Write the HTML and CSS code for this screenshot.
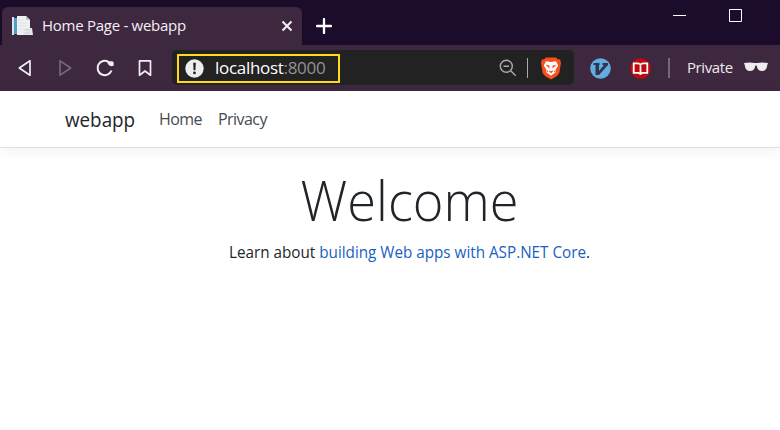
FILE: index.html
```html
<!DOCTYPE html>
<html lang="en">
<head>
<meta charset="utf-8">
<title>Home Page - webapp</title>
<link rel="stylesheet" href="styles.css">
</head>
<body>
<div class="titlebar">
  <div class="tab">
    <svg class="favicon" width="21" height="21" viewBox="0 0 21 21"><path d="M1 2h6v16H1z" fill="#4d9fc9"/><path d="M0 1h2v18H0z" fill="#d9e6ee"/><path d="M5 0h9l4 4v15H5z" fill="#eef1f3"/><path d="M14 0v4h4z" fill="#b9c5cd"/><path d="M7 4h5M7 7h8M7 10h8M7 13h5M7 16h3" stroke="#dde3e7"/><path d="M11 12h9l1 7H11z" fill="#e4e7ea"/><path d="M13 14h5M13 17h5" stroke="#c8cfd4"/></svg>
    <span class="tab-title">Home Page - webapp</span>
    <svg class="tab-close" width="12" height="12" viewBox="0 0 12 12"><path d="M1.500 1.500l9 9M10.500 1.500l-9 9" stroke="#f4f0f5" stroke-width="2"/></svg>
  </div>
  <svg class="new-tab" width="16" height="16" viewBox="0 0 16 16"><path d="M8 1v14M1 8h14" stroke="#fff" stroke-width="2.300" stroke-linecap="round"/></svg>
  <div class="window-controls">
    <svg width="13" height="13" viewBox="0 0 13 13"><path d="M0 6.500h13" stroke="#fff"/></svg>
    <svg width="13" height="13" viewBox="0 0 13 13"><path d="M.5.5h12v12H.5z" fill="none" stroke="#fff"/></svg>
  </div>
</div>
<div class="toolbar">
  <div class="nav-buttons">
    <svg width="20" height="20" viewBox="0 0 20 20"><path d="M15 2.800v14.400L4.300 10z" fill="none" stroke="#f1edf2" stroke-width="1.700" stroke-linejoin="round"/></svg>
    <svg width="20" height="20" viewBox="0 0 20 20"><path d="M5 2.800v14.400L15.700 10z" fill="none" stroke="#786879" stroke-width="1.600" stroke-linejoin="round"/></svg>
    <svg width="20" height="20" viewBox="0 0 20 20"><path d="M13.500 3.800A7.200 7.200 0 1 0 16.500 12.500" fill="none" stroke="#f1edf2" stroke-width="2"/><path d="M11.500 3.200h5.500q1.700 0 1.700 1.700v2.600q-3 1.500-5-.5z" fill="#f1edf2"/></svg>
    <svg width="20" height="20" viewBox="0 0 20 20"><path d="M4.500 2.800h11v14.400L10 13l-5.500 4.200z" fill="none" stroke="#f1edf2" stroke-width="1.700" stroke-linejoin="round"/></svg>
  </div>
  <div class="address">
    <div class="origin">
      <svg width="19" height="19" viewBox="0 0 19 19"><circle cx="9.500" cy="9.500" r="9.200" fill="#eee"/><path d="M8.200 3.800h2.600l-.4 7.400H8.600z" fill="#222"/><circle cx="9.500" cy="13.900" r="1.400" fill="#222"/></svg>
      <span class="url">localhost<span class="port">:8000</span></span>
    </div>
    <svg class="zoom" width="18" height="18" viewBox="0 0 18 18"><circle cx="7.300" cy="7.300" r="6" fill="none" stroke="#aaa" stroke-width="1.400"/><path d="M4.500 7.300h5.600M11.700 11.700l5 5" stroke="#aaa" stroke-width="1.400"/></svg>
    <i class="divider"></i>
    <svg class="brave" width="20" height="23" viewBox="0 0 20 23"><path d="M5 .5h10l2 2 2-.2L20 6l-1.700 10Q17 19 10 22.500 3 19 1.700 16L0 6l1-3.700 2 .2z" fill="#f4511e"/><path d="M5 4.300l5 .8 5-.8 2.200 4.200-2.600 4.300.5 2.200-2.700 2-2.400 1.800-2.400-1.800-2.700-2 .5-2.200L2.800 8.500z" fill="#fff"/><path d="M4.500 7.700l4 .8v3zM15.500 7.700l-4 .8v3zM7.800 13.300l2.200.9 2.200-.9-.6 1.800L10 16.300l-1.600-1.200zM4.900 13l2.500 1.300-1.200 1.300zM15.100 13l-2.500 1.300 1.200 1.300z" fill="#f4511e"/></svg>
  </div>
  <svg class="vim" width="21" height="21" viewBox="0 0 21 21"><circle cx="10.500" cy="10.500" r="10.300" fill="#62acdf"/><path d="M3.500 5h6v2H9v6L14 7h-1.500V5H18v2L9 17H5.500V7h-2z" fill="#34334c"/></svg>
  <svg class="reader" width="21" height="21" viewBox="0 0 21 21"><circle cx="10.500" cy="10.500" r="10.300" fill="#bf0a0e"/><path d="M3.700 5.300h4.500l2.300 1.200 2.300-1.200h4.500v9.500h-4.500l-2.300 1.200-2.300-1.200H3.700zM10.500 6.500v9" fill="none" stroke="#fff" stroke-width="1.800"/></svg>
  <i class="toolbar-divider"></i>
  <span class="private">Private</span>
  <svg class="glasses" width="24" height="10" viewBox="0 0 24 10"><path d="M0 1Q6 0 10.800 1h2.400Q18 0 24 1L23.300 3Q22.600 9 18 9q-4.500 0-5.400-5.500h-1.200Q10.500 9 6 9 1.400 9 .7 3z" fill="#efecef"/></svg>
</div>
<header class="site-header">
  <a class="brand">webapp</a>
  <a class="nav-link home">Home</a>
  <a class="nav-link">Privacy</a>
</header>
<main>
  <h1>Welcome</h1>
  <p>Learn about <a>building Web apps with ASP.NET Core</a>.</p>
</main>
</body>
</html>
```
FILE: styles.css
```css
* { box-sizing: border-box; }
body { margin: 0; height: 430px; overflow: hidden; background: #fff; color: #212529; font-family: "Open Sans", "Noto Sans", sans-serif; }
svg { display: block; flex: none; }
.titlebar { display: flex; height: 45px; background: #1c0c2b; padding-left: 2px; }
.tab { display: flex; align-items: center; width: 300px; height: 38px; margin-top: 7px; padding: 0 9px 0 10px; background: #3e2840; border-radius: 6px 6px 0 0; }
.tab-title { margin-left: 9px; padding-bottom: 2px; font-size: 15px; letter-spacing: -.27px; color: #f4eef5; white-space: nowrap; }
.tab-close { margin-left: auto; }
.new-tab { margin: 18px 0 0 14px; }
.window-controls { display: flex; gap: 43px; margin: 9px 38px 0 auto; }
.toolbar { display: flex; align-items: center; height: 46px; background: #3e2840; padding-left: 15px; }
.nav-buttons { display: flex; gap: 20px; width: 157px; margin-top: -1px; }
.address { display: flex; align-items: center; width: 402px; height: 35px; margin-top: -1px; padding-left: 5px; background: #222; border-radius: 5px; }
.origin { display: flex; align-items: center; width: 163px; height: 29px; padding-left: 6px; border: 2px solid #ffd91a; margin-top: 2px; }
.origin svg { margin-top: -1px; }
.url { margin-left: 11px; padding-bottom: 2px; font-size: 17px; letter-spacing: -.3px; color: #fff; white-space: nowrap; }
.port { color: #929292; }
.zoom { margin-left: 159px; }
.divider { width: 1px; height: 20px; margin-left: 10px; background: #aaa; }
.brave { margin: 1px 0 0 13px; }
.vim { margin-left: 16px; }
.reader { margin-left: 19px; }
.toolbar-divider { width: 2px; height: 20px; margin-left: 17px; background: #77657a; }
.private { width: 57px; margin-left: 17px; padding-bottom: 3px; font-size: 15px; letter-spacing: -.4px; color: #eee9ee; }
.glasses { margin-top: -2px; }
.site-header { display: flex; align-items: center; height: 57px; padding-left: 65px; border-bottom: 1px solid #dee2e6; box-shadow: 0 4px 12px rgba(0,0,0,.05); }
.brand { width: 94px; font-size: 20px; transform: scaleX(.94); transform-origin: left; }
.nav-link { font-size: 16px; letter-spacing: -.55px; color: #454b50; }
.home { width: 59px; }
main { display: flex; flex-direction: column; align-items: center; width: 780px; padding: 18px 0 0 39px; }
h1 { margin: 0; font-size: 56px; font-weight: 300; line-height: 67px; transform: scaleX(.935); }
p { margin: 7px 0 0; font-size: 16px; line-height: 24px; white-space: nowrap; transform: scaleX(.9525); }
p a { color: #1861bf; }
```
